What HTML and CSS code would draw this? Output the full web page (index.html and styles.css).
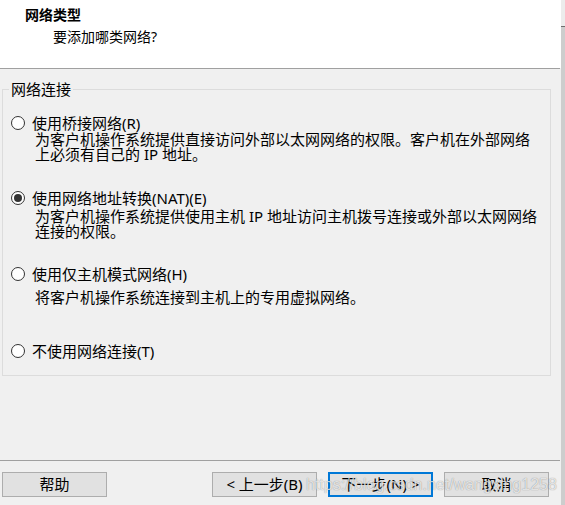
FILE: index.html
```html
<!DOCTYPE html>
<html lang="zh-CN">
<head>
<meta charset="utf-8">
<title>网络类型</title>
<link rel="stylesheet" href="styles.css">
</head>
<body>
<div class="window">
  <div class="main">
    <div class="header">
      <div class="title">网络类型</div>
      <div class="subtitle">要添加哪类网络?</div>
    </div>
    <div class="sep"></div>
    <div class="content">
      <fieldset class="group">
        <legend class="legend">网络连接</legend>
        <div class="opt opt-1"><span class="radio"></span><span class="opt-label">使用桥接网络(R)</span></div>
        <div class="desc desc-1">为客户机操作系统提供直接访问外部以太网网络的权限。客户机在外部网络<br>上必须有自己的 IP 地址。</div>
        <div class="opt opt-2"><span class="radio checked"></span><span class="opt-label">使用网络地址转换(NAT)(E)</span></div>
        <div class="desc desc-2">为客户机操作系统提供使用主机 IP 地址访问主机拨号连接或外部以太网网络<br>连接的权限。</div>
        <div class="opt opt-3"><span class="radio"></span><span class="opt-label">使用仅主机模式网络(H)</span></div>
        <div class="desc desc-3">将客户机操作系统连接到主机上的专用虚拟网络。</div>
        <div class="opt opt-4"><span class="radio"></span><span class="opt-label">不使用网络连接(T)</span></div>
      </fieldset>
    </div>
    <div class="footer">
      <div class="sep"></div>
      <div class="buttons">
        <button class="btn">帮助</button>
        <div class="btn-group">
          <button class="btn">&lt; 上一步(B)</button>
          <button class="btn btn-default">下一步(N) &gt;</button>
          <button class="btn">取消</button>
        </div>
      </div>
    </div>
  </div>
  <div class="edge"><div class="edge-top"></div></div>
  <div class="watermark">https://blog.csdn.net/wangxing1258</div>
</div>
</body>
</html>
```
FILE: styles.css
```css
html, body {
  margin: 0;
  padding: 0;
}
body {
  background: #f0f0f0;
  font-family: "Noto Sans", "Noto Sans CJK SC", sans-serif;
  font-size: 15px;
  color: #000;
}
.window {
  position: relative;
  width: 565px;
  height: 505px;
  display: flex;
  overflow: hidden;
}
.main {
  width: 561px;
  height: 505px;
  display: flex;
  flex-direction: column;
}
.header {
  background: #fff;
  height: 68px;
  box-sizing: border-box;
  padding-top: 7px;
  font-size: 14px;
}
.title {
  font-weight: bold;
  line-height: 16px;
  padding-left: 25px;
}
.subtitle {
  line-height: 16px;
  margin-top: 6px;
  padding-left: 53px;
}
.sep {
  height: 1px;
  width: 560px;
  background: #a0a0a0;
}
.content {
  flex: 1;
  padding-top: 12px;
}
.group {
  margin: 0 0 0 2px;
  width: 549px;
  box-sizing: border-box;
  border: 1px solid #dcdcdc;
  padding: 0 0 16px 0;
  min-width: 0;
}
.legend {
  margin-left: 6px;
  padding: 0 2px;
  line-height: 16px;
}
.opt {
  display: flex;
  align-items: center;
  height: 16px;
  line-height: 16px;
  padding-left: 8px;
}
.radio {
  position: relative;
  width: 14px;
  height: 14px;
  box-sizing: border-box;
  border: 1px solid #333;
  border-radius: 50%;
  background: #fff;
  flex: none;
}
.radio.checked::after {
  content: "";
  position: absolute;
  left: 2px;
  top: 2px;
  width: 8px;
  height: 8px;
  border-radius: 50%;
  background: #333;
}
.opt-label {
  margin-left: 7px;
  white-space: nowrap;
}
.desc {
  padding-left: 32px;
  line-height: 15px;
  white-space: nowrap;
}
.opt-1 { margin-top: 18px; }
.desc-1 { margin-top: 1px; }
.opt-2 { margin-top: 28px; }
.desc-2 { margin-top: 3px; }
.opt-3 { margin-top: 27px; }
.desc-3 { margin-top: 8px; }
.opt-4 { margin-top: 38px; }
.footer {
  height: 45px;
}
.buttons {
  display: flex;
  justify-content: space-between;
  padding: 11px 12px 0 2px;
}
.btn-group {
  display: flex;
  gap: 11px;
}
.btn {
  width: 105px;
  height: 25px;
  box-sizing: border-box;
  background: #e1e1e1;
  border: 1px solid #adadad;
  font-family: "Noto Sans", "Noto Sans CJK SC", sans-serif;
  font-size: 15px;
  line-height: 21px;
  color: #000;
  padding: 0;
  margin: 0;
}
.btn-default {
  border: 2px solid #0078d7;
}
.edge {
  width: 4px;
  height: 505px;
  background: #cdcdcd;
}
.edge-top {
  height: 26px;
  background: #ececec;
  border-bottom: 1px solid #6e6e6e;
}
.watermark {
  position: absolute;
  left: 306px;
  top: 476px;
  font-family: "Liberation Sans", Arial, sans-serif;
  font-size: 16px;
  line-height: 18px;
  color: rgba(255, 255, 255, 0.75);
  text-shadow: 0 0 1px rgba(0, 0, 0, 0.45);
  white-space: nowrap;
  pointer-events: none;
}
```
